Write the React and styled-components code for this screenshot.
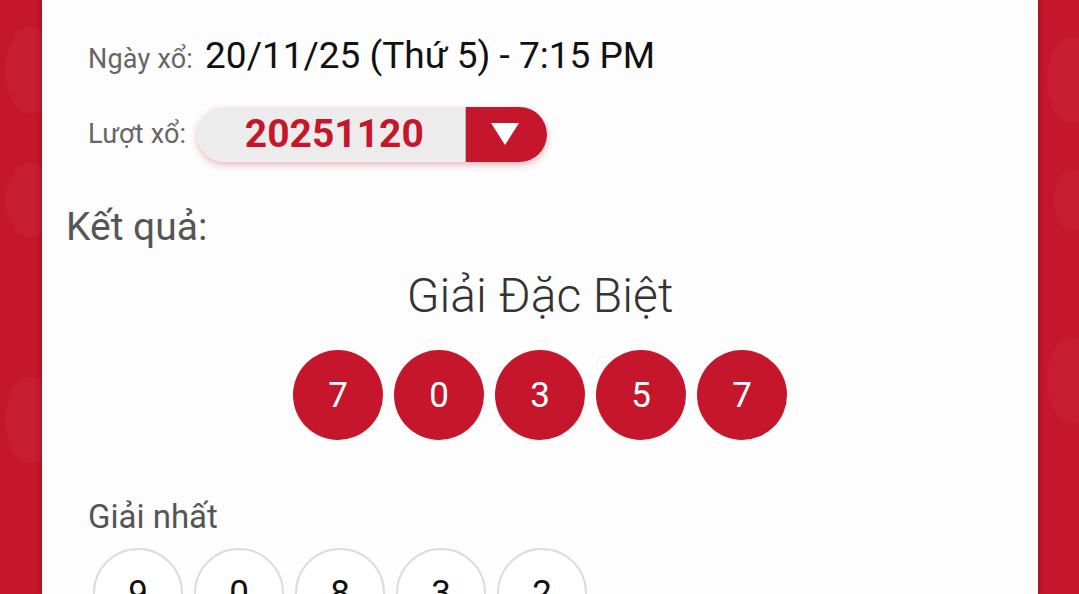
import React from 'react';
import styled, { createGlobalStyle } from 'styled-components';

const GlobalStyle = createGlobalStyle`
  html, body {
    margin: 0;
    padding: 0;
    height: 100%;
    overflow: hidden;
  }
  body {
    font-family: Roboto, 'Noto Sans', sans-serif;
    background-color: #c5162b;
    background-image:
      radial-gradient(ellipse 40px 70px at 30px 70px, rgba(255,255,255,0.03) 60%, transparent 64%),
      radial-gradient(ellipse 40px 60px at 30px 200px, rgba(255,255,255,0.03) 60%, transparent 64%),
      radial-gradient(ellipse 40px 70px at 1072px 80px, rgba(255,255,255,0.03) 60%, transparent 64%),
      radial-gradient(ellipse 30px 50px at 1072px 200px, rgba(255,255,255,0.03) 60%, transparent 64%),
      radial-gradient(ellipse 40px 70px at 30px 420px, rgba(255,255,255,0.03) 60%, transparent 64%),
      radial-gradient(ellipse 40px 70px at 1072px 380px, rgba(255,255,255,0.03) 60%, transparent 64%);
  }
  #root {
    height: 100%;
  }
`;

const Page = styled.div`
  height: 100%;
  padding: 0 41px 0 42px;
  box-sizing: border-box;
`;

const Panel = styled.main`
  height: 100%;
  background: #fdfdfd;
  box-shadow: 0 0 6px rgba(0, 0, 0, 0.35);
  padding: 34px 24px 0 24px;
  box-sizing: border-box;
  overflow: hidden;
`;

const InfoRow = styled.div`
  display: flex;
  align-items: ${(p) => (p.center ? 'center' : 'baseline')};
  padding-left: 22px;
  height: ${(p) => p.h}px;
  margin-top: ${(p) => p.top || 0}px;
`;

const Label = styled.span`
  color: #666;
  font-size: 27px;
  letter-spacing: 0.2px;
  margin-right: ${(p) => p.gap || 12}px;
`;

const DateText = styled.span`
  color: #111;
  font-size: 37px;
`;

const Select = styled.div`
  display: flex;
  width: 350px;
  height: 55px;
  border-radius: 28px;
  overflow: hidden;
  box-shadow: 0 3px 7px rgba(197, 22, 43, 0.3);
`;

const SelectValue = styled.div`
  flex: 1;
  background: #ececec;
  color: #c5162b;
  font-size: 39px;
  font-weight: 700;
  display: flex;
  align-items: center;
  justify-content: center;
  padding-left: 6px;
  border-right: 1px solid #bbb;
`;

const SelectButton = styled.div`
  width: 77px;
  background: #c5162b;
  display: flex;
  align-items: center;
  justify-content: center;
  padding-right: 4px;
`;

const ResultTitle = styled.h2`
  margin: 40px 0 0 0;
  font-weight: 400;
  font-size: 39px;
  color: #555;
`;

const PrizeName = styled.h3`
  margin: 17px 0 0 0;
  text-align: center;
  font-weight: 300;
  font-size: 48px;
  color: #333;
`;

const BallRow = styled.div`
  display: flex;
  gap: 11px;
  justify-content: ${(p) => (p.center ? 'center' : 'flex-start')};
  padding-left: ${(p) => (p.center ? 0 : 27)}px;
  margin-top: ${(p) => p.top}px;
`;

const Ball = styled.div`
  width: 90px;
  height: 90px;
  border-radius: 50%;
  box-sizing: border-box;
  display: flex;
  align-items: center;
  justify-content: center;
  font-size: 35px;
  background: ${(p) => (p.special ? '#c5162b' : '#fff')};
  color: ${(p) => (p.special ? '#fff' : '#111')};
  border: ${(p) => (p.special ? 'none' : '2px solid #dcdcdc')};
`;

const SubPrize = styled.div`
  margin-top: 57px;
  padding-left: 22px;
  font-size: 33px;
  color: #555;
`;

const special = ['7', '0', '3', '5', '7'];
const first = ['9', '0', '8', '3', '2'];

export default function App() {
  return (
    <>
      <GlobalStyle />
      <Page>
        <Panel>
          <InfoRow h={48}>
            <Label>Ngày xổ:</Label>
            <DateText>20/11/25 (Thứ 5) - 7:15 PM</DateText>
          </InfoRow>
          <InfoRow h={60} center top={22}>
            <Label gap={11}>Lượt xổ:</Label>
            <Select>
              <SelectValue>20251120</SelectValue>
              <SelectButton>
                <svg width="30" height="24" viewBox="0 0 30 24">
                  <path d="M1 1 H29 L15 23 Z" fill="#fff" />
                </svg>
              </SelectButton>
            </Select>
          </InfoRow>
          <ResultTitle>Kết quả:</ResultTitle>
          <PrizeName>Giải Đặc Biệt</PrizeName>
          <BallRow center top={26}>
            {special.map((n, i) => (
              <Ball special key={i}>{n}</Ball>
            ))}
          </BallRow>
          <SubPrize>Giải nhất</SubPrize>
          <BallRow top={12}>
            {first.map((n, i) => (
              <Ball key={i}>{n}</Ball>
            ))}
          </BallRow>
        </Panel>
      </Page>
    </>
  );
}
